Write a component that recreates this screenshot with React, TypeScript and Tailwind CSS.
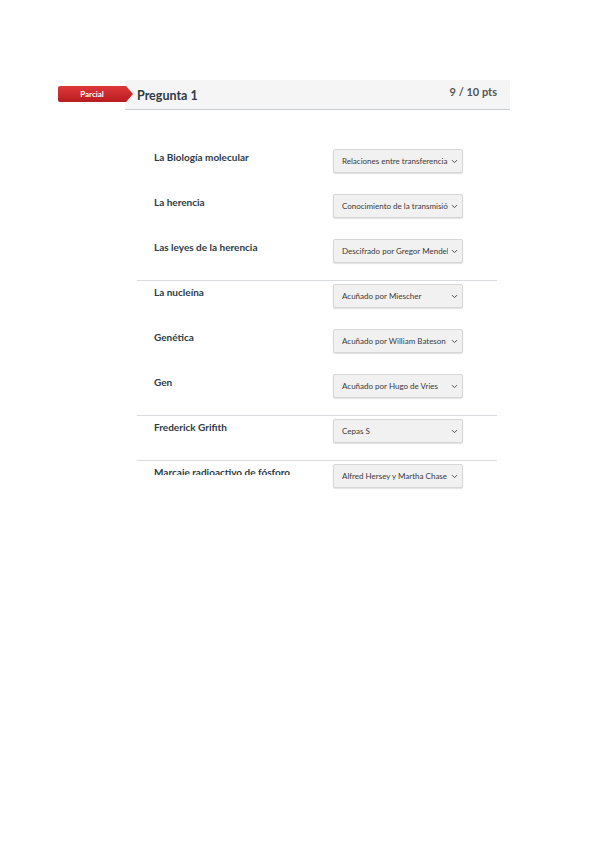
import { ChevronDown } from "lucide-react";

type Row = { label: string; answer: string; clip?: boolean };

// grupos separados por línea
const groups: Row[][] = [
  [
    { label: "La Biología molecular", answer: "Relaciones entre transferencia" },
    { label: "La herencia", answer: "Conocimiento de la transmisión" },
    { label: "Las leyes de la herencia", answer: "Descifrado por Gregor Mendel" },
  ],
  [
    { label: "La nucleína", answer: "Acuñado por Miescher" },
    { label: "Genética", answer: "Acuñado por William Bateson" },
    { label: "Gen", answer: "Acuñado por Hugo de Vries" },
  ],
  [{ label: "Frederick Grifith", answer: "Cepas S" }],
  [{ label: "Marcaje radioactivo de fósforo", answer: "Alfred Hersey y Martha Chase", clip: true }],
];

function Select({ value }: { value: string }) {
  return (
    <div className="mt-[3px] flex h-[24px] w-[130px] items-center rounded-[2px] border border-[#d6d6d6] bg-[#f1f1f1] pl-[8px] pr-[3px] shadow-[0_1px_1px_rgba(0,0,0,0.12)]">
      <span className="w-[106px] overflow-hidden whitespace-nowrap text-[8px] text-[#3a3a3a]">
        {value}
      </span>
      <span className="flex-1" />
      <ChevronDown className="h-[9px] w-[9px] shrink-0 text-[#444]" strokeWidth={2.5} />
    </div>
  );
}

function QuestionRow({ row }: { row: Row }) {
  return (
    <div className="flex h-[45px] items-start pl-[17px]">
      <div
        className={`mt-[4px] w-[179px] text-[10px] font-bold leading-[14px] text-[#2d3b45] ${
          row.clip ? "h-[10px] overflow-hidden" : ""
        }`}
      >
        {row.label}
      </div>
      <Select value={row.answer} />
    </div>
  );
}

export default function App() {
  return (
    <div className="h-[848px] w-[600px] bg-white font-['Lato','Liberation_Sans',sans-serif]">
      <div className="pt-[80px]">
        {/* cabecera de la pregunta */}
        <div className="relative ml-[125px] flex h-[30px] w-[385px] items-center justify-between border-b border-[#c8cdd1] bg-[#f5f5f5] pl-[12px] pr-[13px]">
          <div className="absolute left-[-67px] top-[6px] flex h-[16px] w-[75px] items-center">
            <div className="flex h-full flex-1 items-center justify-center rounded-l-[2px] bg-gradient-to-b from-[#e0383b] to-[#b71c1f] text-[8px] font-bold text-white">
              Parcial
            </div>
            <svg width="7" height="16" viewBox="0 0 7 16" className="shrink-0">
              <defs>
                <linearGradient id="tagGrad" x1="0" y1="0" x2="0" y2="1">
                  <stop offset="0" stopColor="#e0383b" />
                  <stop offset="1" stopColor="#b71c1f" />
                </linearGradient>
              </defs>
              <path d="M0 0 L7 8 L0 16 Z" fill="url(#tagGrad)" />
            </svg>
          </div>
          <span className="mt-[3px] text-[12.5px] font-bold text-[#2d3b45]">Pregunta 1</span>
          <span className="mb-[5px] text-[11px] font-bold text-[#555]">9 / 10 pts</span>
        </div>

        {/* respuestas */}
        <div className="ml-[137px] mt-[36px] w-[360px]">
          {groups.map((group, gi) => (
            <div key={gi} className={gi > 0 ? "-mt-[1px] border-t border-[#d9dcde]" : ""}>
              {group.map((row) => (
                <QuestionRow key={row.label} row={row} />
              ))}
            </div>
          ))}
        </div>
      </div>
    </div>
  );
}
